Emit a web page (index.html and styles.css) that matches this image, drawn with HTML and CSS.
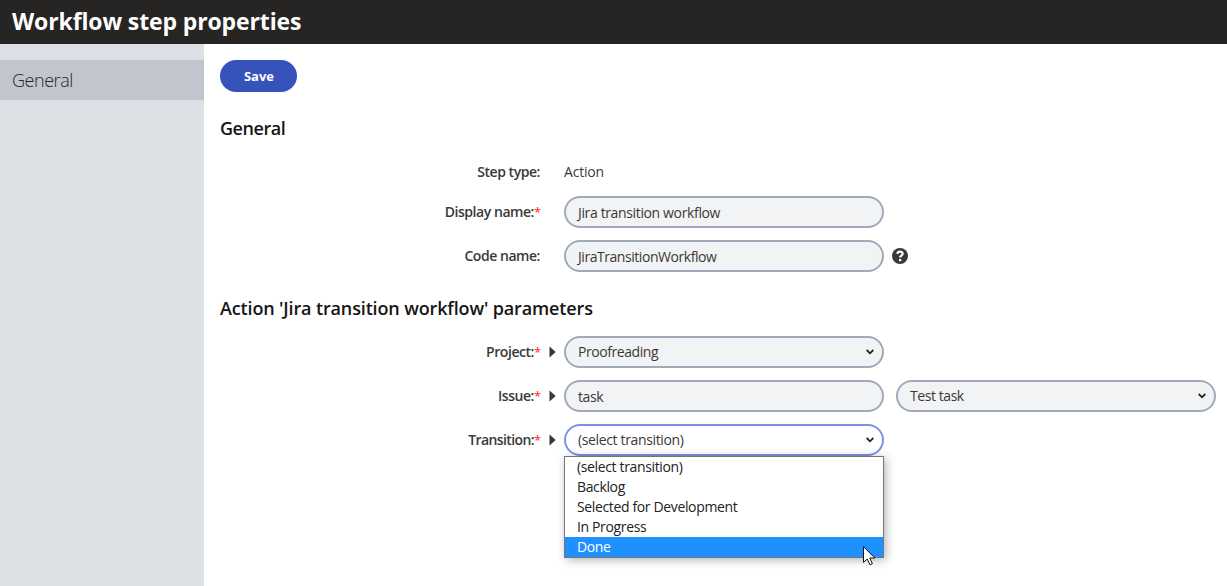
FILE: index.html
```html
<!DOCTYPE html>
<html lang="en">
<head>
<meta charset="utf-8">
<title>Workflow step properties</title>
<link rel="stylesheet" href="styles.css">
</head>
<body>
<header class="header"><h1 class="title">Workflow step properties</h1></header>
<div class="layout">
  <nav class="sidebar"><a class="nav-item">General</a></nav>
  <main class="content">
    <button class="save">Save</button>
    <h2 class="heading heading-general">General</h2>
    <section class="rows">
      <div class="row row-short"><div class="label"><span class="t-step">Step type:</span></div><i></i><span class="value t-action">Action</span></div>
      <div class="row"><div class="label"><span class="t-display">Display name:</span><b class="req">*</b></div><i></i><div class="field input"><span class="t-jira">Jira transition workflow</span></div></div>
      <div class="row"><div class="label"><span class="t-code">Code name:</span></div><i></i><div class="field input"><span class="t-jtw">JiraTransitionWorkflow</span></div>
        <svg class="help" viewBox="0 0 16 16"><circle cx="8" cy="8" r="8" fill="#3a3938"/><path d="M5.4 5.9C5.5 2.9 10.6 2.9 10.6 5.8C10.6 7.7 8.1 7.5 8.1 9.5" fill="none" stroke="#fff" stroke-width="2.2"/><rect x="7" y="11" width="2.3" height="2.2" fill="#fff"/></svg></div>
    </section>
    <h2 class="heading heading-params">Action 'Jira transition workflow' parameters</h2>
    <section class="rows">
      <div class="row"><div class="label"><span class="t-project">Project:</span><b class="req">*</b></div><svg class="caret" viewBox="0 0 7 12"><path d="M.5 .5L6.7 6L.5 11.5Z"/></svg>
        <div class="field"><span class="t-proof">Proofreading</span><svg class="chevron" viewBox="0 0 8 6"><path d="M.7 1L4 4.3L7.3 1"/></svg></div></div>
      <div class="row"><div class="label"><span class="t-issue">Issue:</span><b class="req">*</b></div><svg class="caret" viewBox="0 0 7 12"><path d="M.5 .5L6.7 6L.5 11.5Z"/></svg>
        <div class="field input"><span class="t-task">task</span></div>
        <div class="field second"><span class="t-test">Test task</span><svg class="chevron" viewBox="0 0 8 6"><path d="M.7 1L4 4.3L7.3 1"/></svg></div></div>
      <div class="row"><div class="label"><span class="t-transition">Transition:</span><b class="req">*</b></div><svg class="caret" viewBox="0 0 7 12"><path d="M.5 .5L6.7 6L.5 11.5Z"/></svg>
        <div class="field focused"><span class="t-select">(select transition)</span><svg class="chevron" viewBox="0 0 8 6"><path d="M.7 1L4 4.3L7.3 1"/></svg>
          <div class="menu">
            <div class="option t-select">(select transition)</div>
            <div class="option t-backlog">Backlog</div>
            <div class="option t-selected">Selected for Development</div>
            <div class="option t-progress">In Progress</div>
            <div class="option t-done active">Done</div>
            <svg class="cursor" viewBox="0 0 13 20"><path d="M.5 .7V16.4L4.2 13L7 18.8L9.4 17.7L6.8 12H11.9Z" fill="#fff" stroke="#111"/></svg>
          </div>
        </div></div>
    </section>
  </main>
</div>
</body>
</html>
```
FILE: styles.css
```css
* { box-sizing: border-box; }
body { margin: 0; height: 586px; overflow: hidden; display: flex; flex-direction: column; background: #fff; color: #3a3938; font: 14px/20px "Open Sans", "Noto Sans", sans-serif; letter-spacing: -.36px; }
.header { height: 44px; padding: 0 12px; background: #262524; display: flex; align-items: flex-start; flex: none; }
.title { margin: 0; color: #fff; font-size: 23px; line-height: 42px; font-weight: 700; white-space: nowrap; letter-spacing: -.13px; }
.layout { display: flex; flex: 1; }
.sidebar { width: 204px; padding-top: 16px; background: #dde0e5; flex: none; }
.nav-item { display: block; height: 40px; padding-left: 12px; background: #c1c5ce; color: #262524; font-size: 18px; line-height: 41px; font-weight: 300; letter-spacing: -.45px; }
.content { flex: 1; padding: 16px 0 0 16px; }
.save { display: block; width: 77px; height: 32px; padding: 0 0 0 1px; border: 0; border-radius: 16px; background: #3553ba; color: #fff; font: 700 13px/32px "Open Sans", sans-serif; letter-spacing: 0; }
.heading { margin: 24px 0 0; height: 26px; color: #151515; font-size: 18px; line-height: 24px; font-weight: 600; white-space: nowrap; letter-spacing: -.14px; }
.heading-general { letter-spacing: -.45px; }
.heading-params { margin-top: 24px; }
.rows { display: grid; gap: 12px; padding-top: 14px; }
.row { display: grid; grid-template-columns: 320px 24px 320px 320px; align-items: center; height: 32px; white-space: nowrap; }
.row-short { height: 28px; padding-top: 4px; }
.label { font-weight: 600; text-align: right; letter-spacing: -.45px; }
.req { display: inline-block; width: 6px; color: #f22; font-size: 13px; font-weight: 400; letter-spacing: 0; }
.caret { width: 7px; height: 12px; margin-left: 9px; fill: #3a3938; }
.field { position: relative; height: 32px; padding: 0 8px 0 12px; border: 2px solid #a2aaba; border-radius: 16px; background: #f2f3f5; display: flex; align-items: center; justify-content: space-between; }
.input { padding-top: 2px; }
.second { margin-left: 12px; margin-right: -12px; }
.focused { background: #fff; border-color: #7c92e2; }
.chevron { width: 8px; height: 6px; fill: none; stroke: #222; stroke-width: 1.8; }
.help { width: 16px; height: 16px; margin-left: 8px; }
.menu { position: absolute; left: -2px; top: 30px; width: 320px; height: 102px; border: 1px solid #767676; background: #fff; color: #222; box-shadow: 2px 2px 9px rgba(0,0,0,.3); }
.option { height: 20px; padding-left: 12px; line-height: 20px; }
.active { background: #1e90ff; color: #fff; }
.cursor { position: absolute; left: 298px; top: 89px; width: 13px; height: 20px; }
.t-jtw { letter-spacing: -.45px; }
.t-proof, .t-task, .t-test { letter-spacing: -.43px; }
.t-action { letter-spacing: -.2px; }
.t-transition { letter-spacing: -.6px; }
```
